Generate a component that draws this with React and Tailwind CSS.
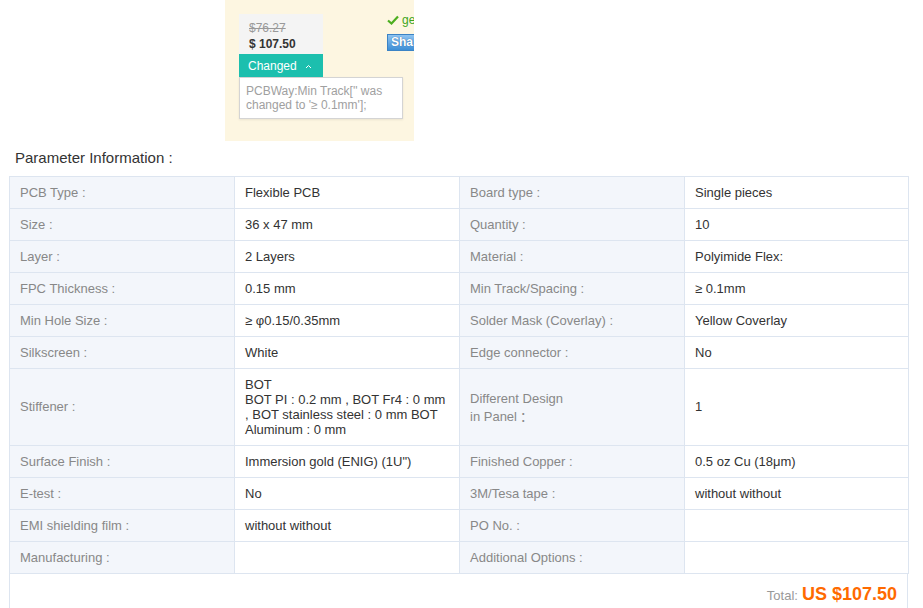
import React from 'react'

const rows = [
  ['PCB Type :', 'Flexible PCB', 'Board type :', 'Single pieces'],
  ['Size :', '36 x 47 mm', 'Quantity :', '10'],
  ['Layer :', '2 Layers', 'Material :', 'Polyimide Flex:'],
  ['FPC Thickness :', '0.15 mm', 'Min Track/Spacing :', '≥ 0.1mm'],
  ['Min Hole Size :', '≥ φ0.15/0.35mm', 'Solder Mask (Coverlay) :', 'Yellow Coverlay'],
  ['Silkscreen :', 'White', 'Edge connector :', 'No'],
  ['Stiffener :', 'stiffener', 'panel', '1'],
  ['Surface Finish :', 'Immersion gold (ENIG) (1U")', 'Finished Copper :', '0.5 oz Cu (18μm)'],
  ['E-test :', 'No', '3M/Tesa tape :', 'without without'],
  ['EMI shielding film :', 'without without', 'PO No. :', ''],
  ['Manufacturing :', '', 'Additional Options :', ''],
]

const label = 'bg-[#f3f6fb] border border-[#dde5f0] px-[10px] text-[13px] text-[#888] align-middle'
const value = 'bg-white border border-[#dde5f0] px-[10px] text-[13px] text-[#333] align-middle'

const App = () => {
  return (
    <div className="w-[923px] h-[608px] overflow-hidden bg-white font-['Liberation_Sans',Arial,sans-serif]">
      {/* price summary */}
      <div className="ml-[225px] w-[189px] h-[141px] bg-[#fdf6e1] overflow-hidden flex pl-[14px] pt-[14px]">
        <div className="relative w-[84px] shrink-0">
          <div className="bg-[#f4f4f4] h-[40px] pl-[10px] pt-[6px] text-[12px] leading-[16px]">
            <div className="text-[#999] line-through">$76.27</div>
            <div className="text-[#333] font-bold">$ 107.50</div>
          </div>
          <div className="bg-[#1cbfae] h-[23px] pl-[9px] flex items-center gap-[8px] text-white text-[12px]">
            Changed
            <svg width="7" height="5" viewBox="0 0 7 5" className="mt-[1px]">
              <path d="M1 4 L3.5 1.5 L6 4" stroke="white" strokeWidth="1" fill="none" />
            </svg>
          </div>
          <div className="absolute left-0 top-[63px] w-[164px] h-[42px] bg-white border border-[#d4d4d4] px-[6px] pt-[6px] text-[12px] leading-[14px] text-[#a0a0a0] shadow-[0_1px_2px_rgba(0,0,0,0.08)]">
            PCBWay:Min Track['' was changed to '≥ 0.1mm'];
          </div>
        </div>
        <div className="ml-[64px] -mt-[1px] flex flex-col shrink-0">
          <div className="flex items-center gap-[3px] h-[14px] whitespace-nowrap text-[12px] text-[#3ea51d]">
            <svg width="12" height="10" viewBox="0 0 12 10">
              <path d="M1 5.5 L4.5 8.5 L11 1.5" stroke="#4cae1f" strokeWidth="2.2" fill="none" />
            </svg>
            <span>get</span>
          </div>
          <div className="mt-[7px] h-[17px] w-[50px] border border-[#3b83c5] bg-gradient-to-b from-[#8fc4f0] to-[#3c8fd6] text-white text-[12px] font-bold leading-[15px] pl-[3px] [text-shadow:0_0_1px_#1e5a94]">
            Share
          </div>
        </div>
      </div>

      <div className="h-[35px] flex items-center pl-[15px] text-[15px] text-[#333]">Parameter Information :</div>

      <div className="ml-[9px] w-[899px]">
        <table className="w-full table-fixed border-collapse">
          <colgroup>
            <col className="w-[225px]" />
            <col className="w-[225px]" />
            <col className="w-[225px]" />
            <col className="w-[224px]" />
          </colgroup>
          <tbody>
            {rows.map((r) =>
              r[1] === 'stiffener' ? (
                <tr key={r[0]} className="h-[77px]">
                  <td className={label}>{r[0]}</td>
                  <td className={value + ' leading-[15px]'}>
                    BOT
                    <br />
                    BOT PI : 0.2 mm , BOT Fr4 : 0 mm , BOT stainless steel : 0 mm BOT Aluminum : 0 mm
                  </td>
                  <td className={label + ' leading-[17px]'}>
                    Different Design
                    <br />
                    in Panel<span className="font-['Noto_Sans_CJK_SC',sans-serif]"> ：</span>
                  </td>
                  <td className={value}>{r[3]}</td>
                </tr>
              ) : (
                <tr key={r[0]} className="h-[32px]">
                  <td className={label}>{r[0]}</td>
                  <td className={value}>{r[1]}</td>
                  <td className={label}>{r[2]}</td>
                  <td className={value}>{r[3]}</td>
                </tr>
              )
            )}
          </tbody>
        </table>
        <div className="h-[40px] border-x border-[#dde5f0] flex items-center justify-end pr-[10px] gap-[4px]">
          <span className="text-[13px] text-[#999] mt-[3px]">Total:</span>
          <span className="text-[18px] font-bold text-[#ff6a00]">US $107.50</span>
        </div>
      </div>
    </div>
  )
}

export default App
